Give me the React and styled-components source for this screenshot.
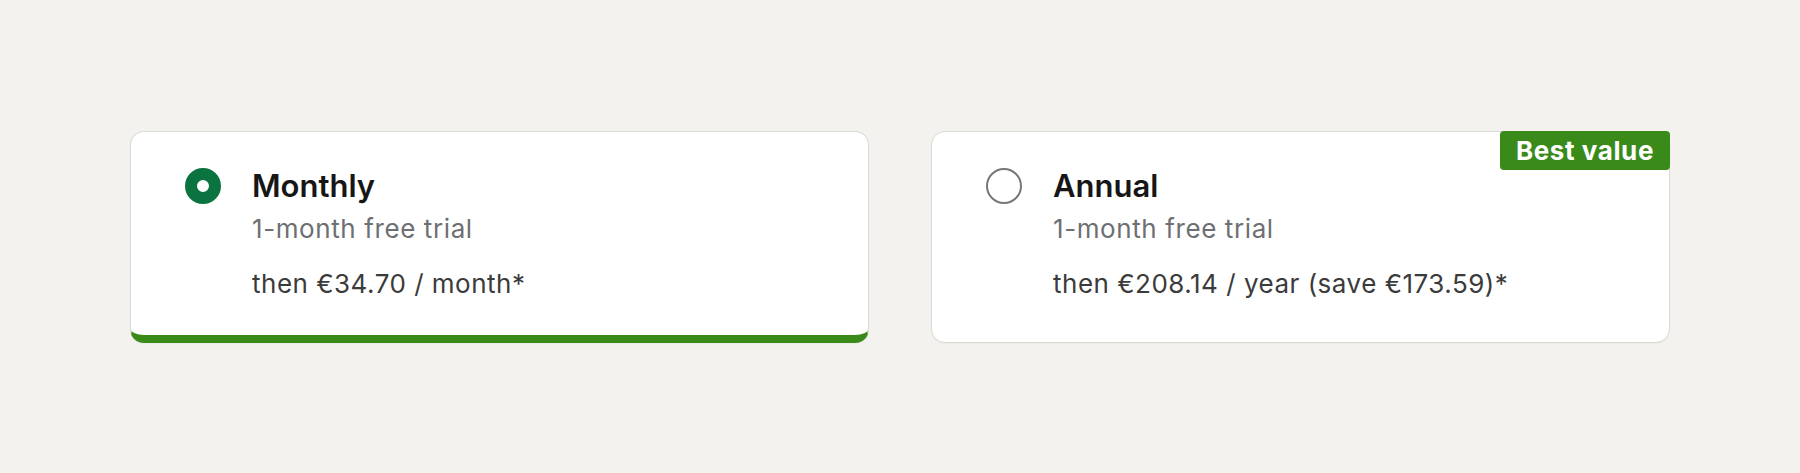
import React from 'react';
import styled, { createGlobalStyle } from 'styled-components';

const GlobalStyle = createGlobalStyle`
  html, body {
    margin: 0;
    padding: 0;
    background: #f3f2ee;
  }

  body {
    font-family: Inter, "Noto Sans", "Liberation Sans", sans-serif;
    -webkit-font-smoothing: antialiased;
  }
`

const Page = styled.main`
  min-height: 473px;
  display: flex;
  align-items: center;
  justify-content: center;
`

const Plans = styled.div`
  display: grid;
  grid-template-columns: 739px 739px;
  column-gap: 62px;
`

const Card = styled.label`
  position: relative;
  display: flex;
  align-items: flex-start;
  gap: 31px;
  padding: 34px 54px 34px;
  background: #fff;
  border: 1px solid #dbdad5;
  border-bottom: ${({ $selected }) => ($selected ? '8px solid #3a8a1a' : '1px solid #dbdad5')};
  border-radius: 14px;
  box-shadow: 0 1px 2px rgba(0, 0, 0, 0.04);
  cursor: pointer;
`

const Radio = styled.span`
  flex: none;
  box-sizing: border-box;
  width: 36px;
  height: 36px;
  margin-top: 2px;
  border-radius: 50%;
  border: ${({ $checked }) => ($checked ? '12px solid #0b7340' : '2px solid #777')};
  background: #fff;
`

const Body = styled.div`
  display: flex;
  flex-direction: column;
`

const Title = styled.div`
  font-size: 31px;
  line-height: 40px;
  font-weight: 600;
  color: #161616;
`

const Trial = styled.div`
  margin-top: 5px;
  font-size: 26px;
  line-height: 35px;
  letter-spacing: 0.6px;
  color: #6d6f72;
`

const Price = styled.div`
  margin-top: 20px;
  font-size: 26px;
  line-height: 35px;
  letter-spacing: 0.5px;
  color: #3b3b3b;
`

const Badge = styled.span`
  position: absolute;
  top: -1px;
  right: -1px;
  height: 39px;
  padding: 0 16px;
  display: flex;
  align-items: center;
  background: #3a8a1a;
  color: #fff;
  font-size: 26px;
  font-weight: 700;
  letter-spacing: 0.6px;
  border-radius: 4px;
`

const plans = [
  { id: 'monthly', title: 'Monthly', trial: '1-month free trial', price: 'then €34.70 / month*' },
  { id: 'annual', title: 'Annual', trial: '1-month free trial', price: 'then €208.14 / year (save €173.59)*', badge: 'Best value' },
]

const App = () => {
  const selected = 'monthly'

  return (
    <>
      <GlobalStyle />
      <Page>
        <Plans>
          {plans.map((plan) => (
            <Card key={plan.id} $selected={plan.id === selected}>
              {plan.badge && <Badge>{plan.badge}</Badge>}
              <Radio $checked={plan.id === selected} />
              <Body>
                <Title>{plan.title}</Title>
                <Trial>{plan.trial}</Trial>
                <Price>{plan.price}</Price>
              </Body>
            </Card>
          ))}
        </Plans>
      </Page>
    </>
  )
}

export default App;
